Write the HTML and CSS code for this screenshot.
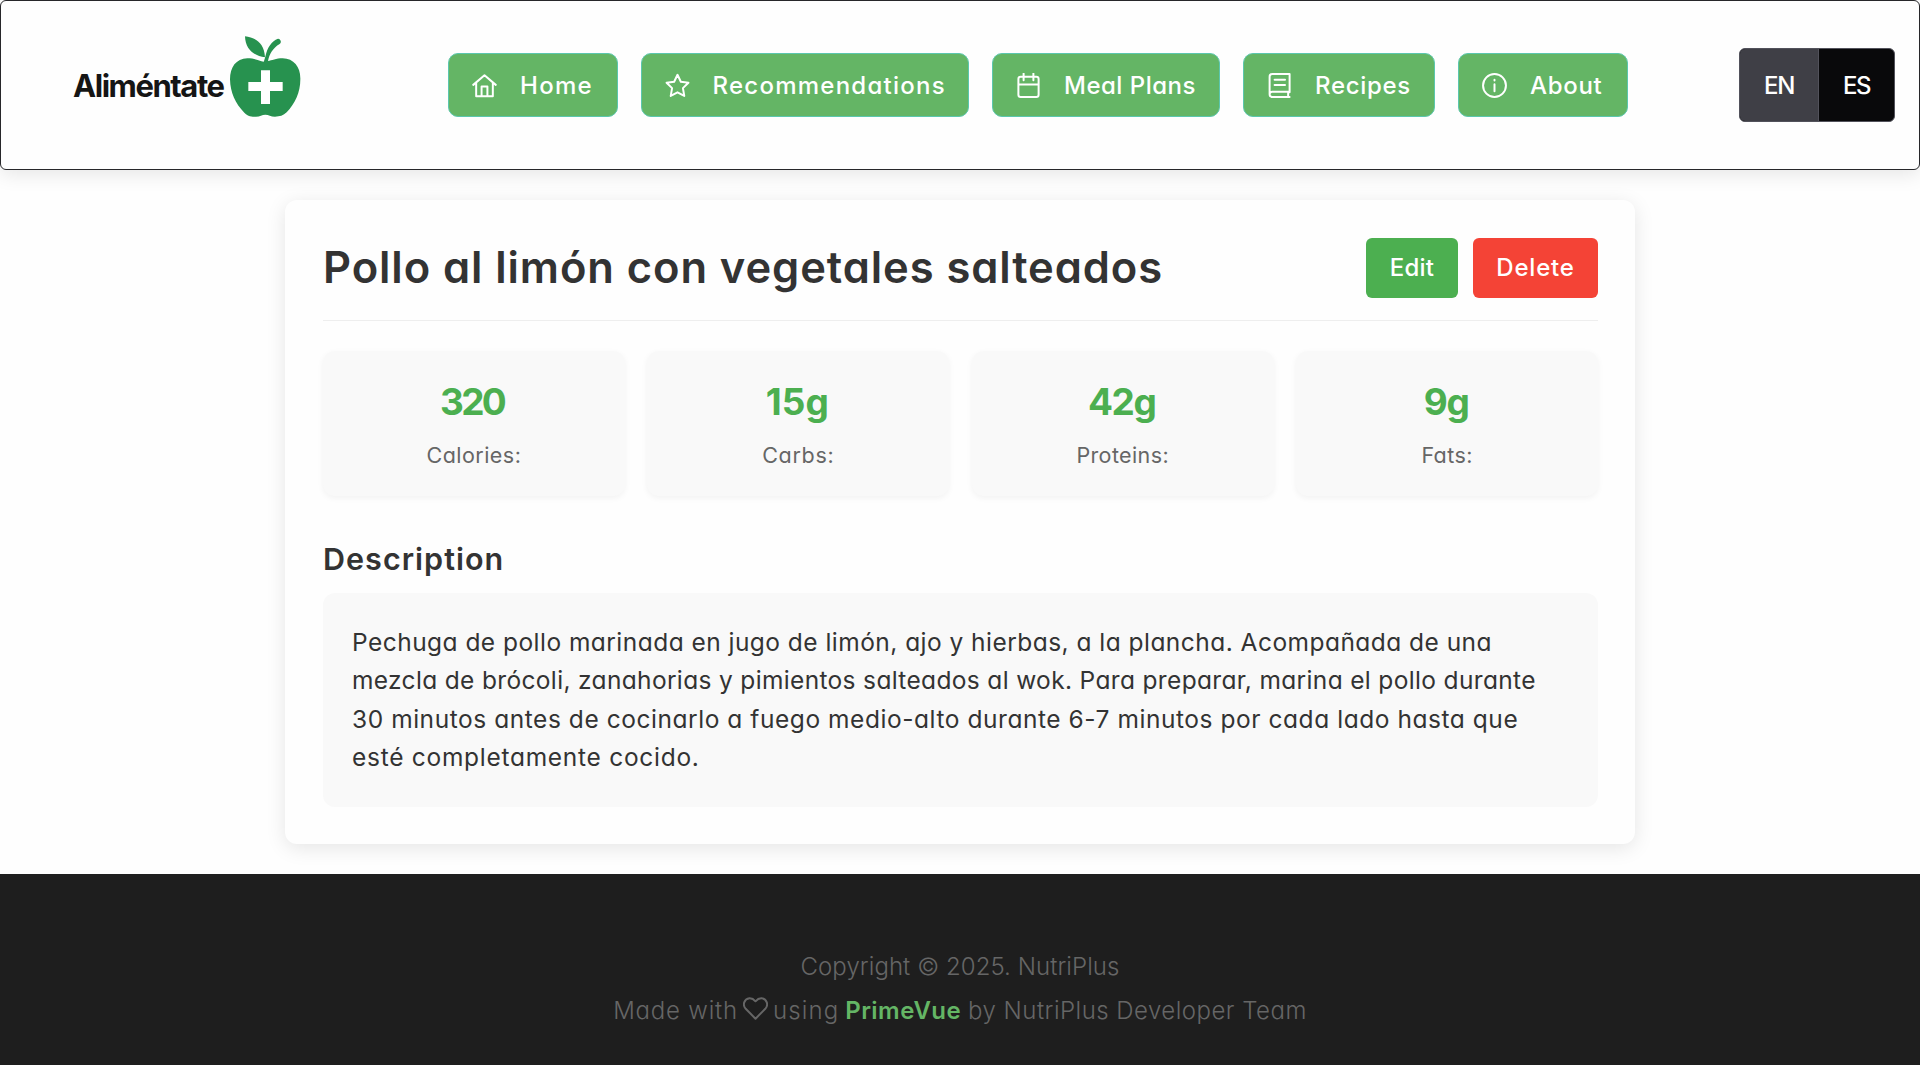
FILE: index.html
```
<!DOCTYPE html>
<html lang="en">
<head>
<meta charset="utf-8">
<title>Aliméntate</title>
<link rel="stylesheet" href="styles.css">
</head>
<body>
<header class="topbar">
  <a class="logo">
    <span class="logo-name">Aliméntate</span>
    <svg class="logo-apple" viewBox="0 0 213 243">
      <path fill="#27924f" d="M45 1C75 4 103 20 105 64C72 60 46 40 45 1ZM101 77C88 75 75 67 52 67C18 68 0 94 0 130C1 170 16 203 43 230C54 241 65 242 78 242C90 242 96 236 106 236C116 236 122 242 135 242C149 242 160 239 170 229C195 203 211 170 211 130C212 93 192 68 158 67C138 67 125 74 114 75C118 55 128 36 149 24C156 18 152 9 144 8C125 15 112 34 106 62C104 67 103 73 101 77Z"/>
      <path fill="#fff" d="M93 103h27v35h38v27h-38v39H93v-39H55v-27h38zM86 71L104 63L100 76Z"/>
    </svg>
  </a>
  <nav class="menu">
    <a class="menu-item home"><svg class="icon" viewBox="0 0 24 24"><path d="M1.2 11.4L12 2.2l10.800 9.200M4 9.400V22.300h16V9.400M9.200 22.300v-9.300h5.600v9.300"/></svg><span>Home</span></a>
    <a class="menu-item recommendations"><svg class="icon" viewBox="0 0 24 24"><path d="M12 1.700l3.200 6.700 7.300 1-5.300 5.100 1.300 7.500L12 18.500l-6.500 3.500 1.300-7.500L1.500 9.400l7.300-1z"/></svg><span>Recommendations</span></a>
    <a class="menu-item meals"><svg class="icon" viewBox="0 0 24 24"><path d="M4.500 3.600h15q2.200 0 2.200 2.200v15q0 2.200-2.200 2.200h-15q-2.200 0-2.200-2.200v-15q0-2.200 2.200-2.200zM2.300 11h19.400M7.300.5v6.500M16.700.5v6.500"/></svg><span>Meal Plans</span></a>
    <a class="menu-item recipes"><svg class="icon" viewBox="0 0 24 24"><path d="M21.700 1H5Q2.500 1 2.500 3.500v17Q2.500 23 5 23h16.700M21.700 1v17.500M21 18H5q-2.500 0-2.500 2.500M20.300 18v5M7.300 6.500h10M7.300 11.500h10"/></svg><span>Recipes</span></a>
    <a class="menu-item about"><svg class="icon" viewBox="0 0 24 24"><circle cx="12" cy="12" r="11"/><path d="M12 10.700v6.800M12 6.500v.6"/></svg><span>About</span></a>
  </nav>
  <div class="lang">
    <span class="lang-option selected">EN</span>
    <span class="lang-option">ES</span>
  </div>
</header>
<main class="recipe">
  <div class="recipe-head">
    <h1>Pollo al limón con vegetales salteados</h1>
    <div class="actions">
      <button class="btn edit">Edit</button>
      <button class="btn delete">Delete</button>
    </div>
  </div>
  <section class="stats">
    <div class="stat"><b class="v320">320</b><span class="calories">Calories:</span></div>
    <div class="stat"><b class="v15">15g</b><span class="carbs">Carbs:</span></div>
    <div class="stat"><b class="v42">42g</b><span class="proteins">Proteins:</span></div>
    <div class="stat"><b class="v9">9g</b><span class="fats">Fats:</span></div>
  </section>
  <h2>Description</h2>
  <p class="description">
    <span class="line l1">Pechuga de pollo marinada en jugo de limón, ajo y hierbas, a la plancha. Acompañada de una</span>
    <span class="line l2">mezcla de brócoli, zanahorias y pimientos salteados al wok. Para preparar, marina el pollo durante</span>
    <span class="line l3">30 minutos antes de cocinarlo a fuego medio-alto durante 6-7 minutos por cada lado hasta que</span>
    <span class="line l4">esté completamente cocido.</span>
  </p>
</main>
<footer class="footer">
  <div class="copyright">Copyright © 2025. NutriPlus</div>
  <div class="credits"><span class="made">Made with</span><svg class="heart" viewBox="0 0 24 24"><path d="M12 21.800L2.600 12.300C-.8 8.500 1 2.900 6.200 2.200C8.800 2 10.500 3.400 12 5.100C13.500 3.400 15.200 2 17.800 2.200C23 2.900 24.800 8.500 21.400 12.300Z"/></svg><span class="using">using</span><strong class="primevue">PrimeVue</strong><span class="team">by NutriPlus Developer Team</span></div>
</footer>
</body>
</html>
```
FILE: styles.css
```
* { box-sizing: border-box; }
body {
  margin: 0;
  height: 1065px;
  display: flex;
  flex-direction: column;
  background: #fefefe;
  color: #333;
  font-family: Inter, "Open Sans", sans-serif;
  font-size: 24px;
  font-feature-settings: "cv11";
}
.topbar {
  height: 170px;
  flex: none;
  display: flex;
  align-items: center;
  padding: 0 24px 0 72px;
  border: 1px solid #27272a;
  border-radius: 6px;
  background: #fefefe;
  box-shadow: 0 4px 20px rgba(0, 0, 0, .1);
}
.logo { width: 375px; display: flex; align-items: flex-start; height: 98px; }
.logo-name {
  width: 157px;
  padding-top: 30px;
  font-size: 31px;
  font-weight: 650;
  line-height: 40px;
  letter-spacing: -1.45px;
  color: #151515;
  font-feature-settings: normal;
}
.logo-apple { width: 71px; height: 81px; flex: none; }
.menu { display: flex; gap: 23px; }
.menu-item {
  height: 64px;
  display: flex;
  align-items: center;
  gap: 23px;
  padding-left: 23px;
  border: 1px solid #5bc7ae;
  border-radius: 10px;
  background: #64b565;
  color: #fff;
  font-weight: 500;
  white-space: nowrap;
}
.home { width: 169.5px; letter-spacing: 1.3px; }
.recommendations { width: 328.5px; letter-spacing: 1.25px; }
.meals { width: 228px; letter-spacing: .5px; }
.recipes { width: 192px; letter-spacing: .7px; }
.about { width: 170px; letter-spacing: .68px; }
.icon { width: 25px; height: 25px; flex: none; fill: none; stroke: #fff; stroke-width: 1.9; stroke-linejoin: round; stroke-linecap: round; }
.lang {
  margin-left: auto;
  width: 156px;
  height: 74px;
  display: grid;
  grid-template-columns: 79px 1fr;
  border: 1px solid #52525b;
  border-radius: 6px;
  overflow: hidden;
  background: #09090b;
  color: #fff;
  font-weight: 500;
  letter-spacing: -1.4px;
}
.lang-option { display: grid; place-items: center; }
.selected { background: #3f3f46; border-right: 1px solid #52525b; }
.recipe {
  width: 1350px;
  height: 644px;
  flex: none;
  margin: 30px auto;
  padding: 38px 37px 0 38px;
  border-radius: 12px;
  background: #fefefe;
  box-shadow: 0 4px 20px rgba(0, 0, 0, .1);
}
.recipe-head {
  height: 83px;
  display: flex;
  justify-content: space-between;
  border-bottom: 1px solid #eee;
}
h1 { margin: 0; font-size: 43.5px; line-height: 58px; font-weight: 600; letter-spacing: .92px; white-space: nowrap; }
.actions { display: flex; gap: 15px; }
.btn { height: 60px; padding: 0 0 2px; border: 0; border-radius: 6px; color: #fff; font: inherit; font-weight: 500; font-feature-settings: inherit; }
.edit { width: 92px; background: #4caf50; letter-spacing: .2px; }
.delete { width: 125px; background: #f44336; letter-spacing: .8px; }
.stats { margin-top: 30px; display: grid; grid-template-columns: repeat(4, 1fr); gap: 22.5px; }
.stat {
  height: 145px;
  padding-top: 22px;
  display: flex;
  flex-direction: column;
  align-items: center;
  border-radius: 12px;
  background: #f9f9f9;
  box-shadow: 0 2px 6px rgba(0, 0, 0, .05);
}
.stat b { padding-right: 2px; font-size: 37px; line-height: 58px; color: #4caf50; }
.stat span { margin-top: 7px; font-size: 21.5px; line-height: 34px; color: #666; }
.stat .v320 { padding-right: 4px; letter-spacing: -2.8px; }
.v42, .v9 { letter-spacing: -1.4px; }
.calories { letter-spacing: .45px; }
.carbs { letter-spacing: .7px; }
.proteins { letter-spacing: .38px; }
.fats { letter-spacing: .4px; }
h2 { margin: 44px 0 0; font-size: 30.5px; line-height: 38px; font-weight: 600; letter-spacing: 1.02px; }
.description { height: 214px; margin: 15px 0 0; padding: 30px 29px 0; border-radius: 12px; background: #f9f9f9; font-size: 24.5px; line-height: 38.4px; }
.line { display: block; white-space: nowrap; }
.l1 { letter-spacing: .465px; }
.l2 { letter-spacing: .341px; }
.l3 { letter-spacing: .55px; }
.l4 { letter-spacing: .72px; }
.footer {
  flex: 1;
  padding-top: 71px;
  background: #1e1e1e;
  color: #666;
  font-weight: 300;
  line-height: 44px;
  text-align: center;
}
.copyright { letter-spacing: .06px; }
.credits { display: flex; justify-content: center; align-items: center; white-space: nowrap; }
.made { letter-spacing: .8px; }
.heart { width: 25px; height: 25px; margin: -6px 5px 0 5px; fill: none; stroke: #666; stroke-width: 1.9; stroke-linejoin: round; }
.using { letter-spacing: 1.1px; }
.primevue { margin: 0 7px 0 6px; color: #64b565; font-weight: 600; letter-spacing: .45px; }
.team { letter-spacing: .48px; }
```
